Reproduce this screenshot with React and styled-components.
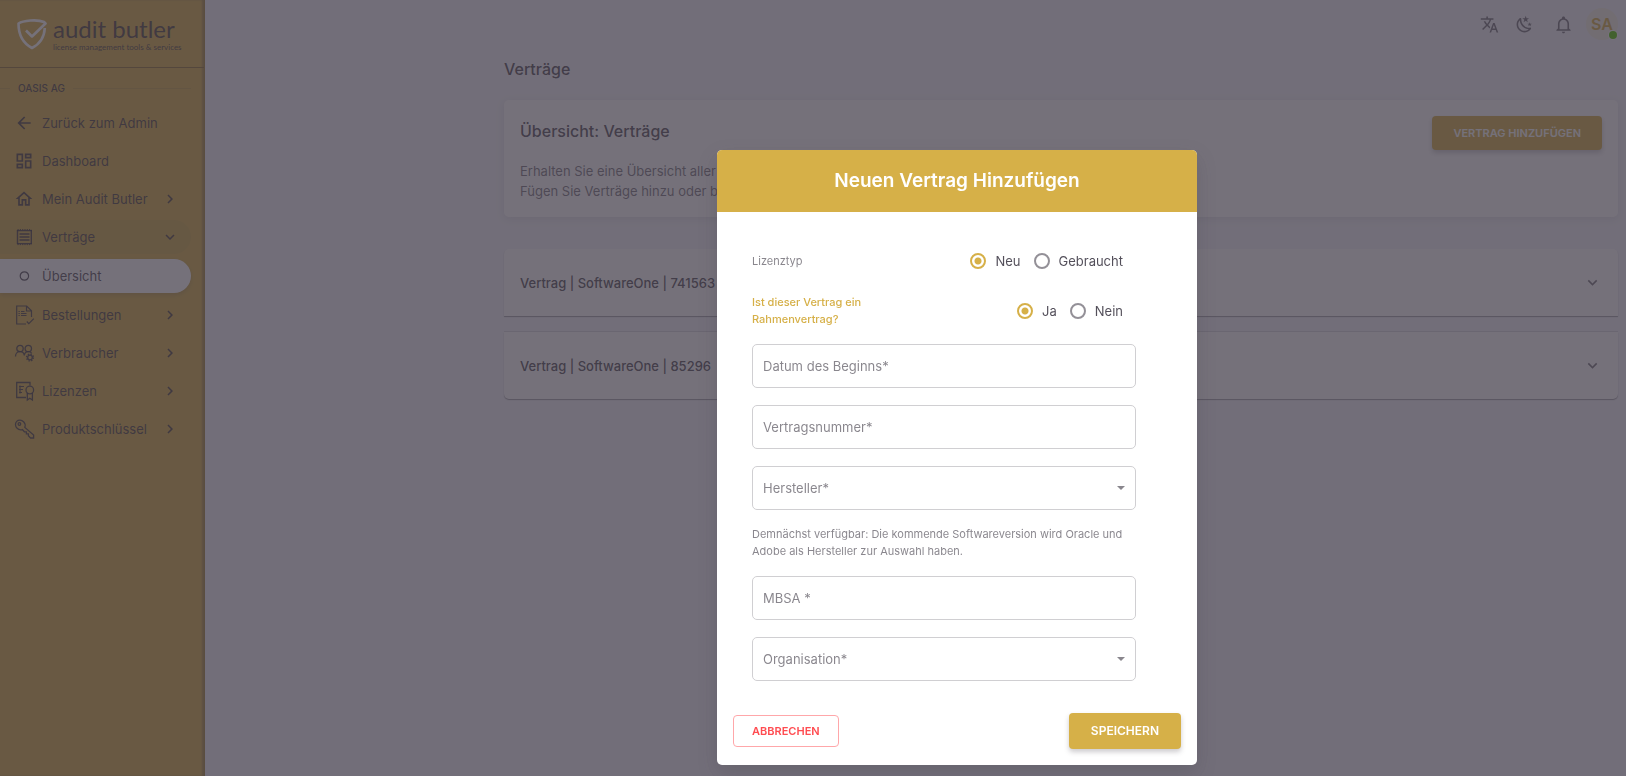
import React from 'react';
import styled, { createGlobalStyle } from 'styled-components';

const ink = 'rgba(58, 53, 65, 0.87)';
const inkSoft = 'rgba(58, 53, 65, 0.68)';
const inkFaint = 'rgba(58, 53, 65, 0.6)';
const gold = '#d6b048';

const GlobalStyle = createGlobalStyle`
  *, *::before, *::after { box-sizing: border-box; }
  body {
    margin: 0;
    background: #f4f5fa;
    color: ${ink};
    font-family: Inter, "Liberation Sans", sans-serif;
    font-size: 13px;
    line-height: 20px;
  }
  button, input, select { font: inherit; }
  h1, h2, p, ul { margin: 0; padding: 0; }
  ul { list-style: none; }
`;

const Shell = styled.div`
  display: flex;
  min-height: 100vh;
`;

const Sidebar = styled.nav`
  flex: none;
  width: 205px;
  background: ${gold};
  border-right: 1px solid #a4873a;
  box-shadow: inset -2px 0 2px rgba(58, 53, 65, 0.3);
`;

const Brand = styled.a`
  display: flex;
  align-items: center;
  gap: 6px;
  height: 68px;
  padding-left: 17px;
  border-bottom: 1px solid #8f7433;
  color: ${ink};
  text-decoration: none;
`;

const BrandText = styled.span`
  display: flex;
  flex-direction: column;
  font-family: Lato, "Liberation Sans", sans-serif;
`;

const BrandName = styled.span`
  font-size: 24px;
  line-height: 26px;
`;

const BrandLine = styled.span`
  font-size: 8px;
  line-height: 10px;
  white-space: nowrap;
`;

const SectionLabel = styled.h2`
  display: flex;
  align-items: center;
  gap: 8px;
  height: 20px;
  margin: 10px 13px 8px 0;
  font-size: 10px;
  font-weight: 500;
  white-space: nowrap;
  &::before, &::after {
    content: '';
    height: 1px;
    width: 10px;
    background: rgba(58, 53, 65, 0.12);
  }
  &::after { flex: 1; }
`;

const NavList = styled.ul`
  display: flex;
  flex-direction: column;
  gap: 4px;
  padding-right: 13px;
`;

const SubList = styled.ul`
  margin: 5px 0 1px;
`;

const NavLink = styled.a`
  display: flex;
  align-items: center;
  gap: 8px;
  height: 34px;
  padding: 0 12px 0 14px;
  border-radius: 0 17px 17px 0;
  color: ${ink};
  text-decoration: none;
  background: ${(p) => (p.$state === 'current' ? '#fff' : p.$state === 'open' ? 'rgba(58, 53, 65, 0.05)' : 'none')};
  box-shadow: ${(p) => (p.$state === 'current' ? '0 2px 4px rgba(58, 53, 65, 0.2)' : 'none')};
  span { flex: 1; }
  svg { flex: none; }
`;

const Main = styled.main`
  flex: 1;
  min-width: 0;
  padding: 0 8px 0 299px;
`;

const TopBar = styled.header`
  display: flex;
  justify-content: flex-end;
  align-items: center;
  gap: 16px;
  height: 48px;
`;

const IconButton = styled.button`
  display: flex;
  padding: 0;
  border: 0;
  background: none;
  color: ${inkSoft};
  &:nth-of-type(3) { margin: 0 -3px 0 4px; }
`;

const Avatar = styled.button`
  position: relative;
  width: 32px;
  height: 32px;
  padding: 0;
  border: 0;
  border-radius: 50%;
  background: #f6f0e3;
  color: ${gold};
  font-size: 16px;
  font-weight: 600;
`;

const Presence = styled.i`
  position: absolute;
  right: 1px;
  bottom: 1px;
  width: 8px;
  height: 8px;
  border-radius: 50%;
  background: #56ca00;
  box-shadow: 0 0 0 1px #fff;
`;

const PageTitle = styled.h1`
  margin: 9px 0 19px;
  font-size: 16px;
  line-height: 24px;
  font-weight: 500;
`;

const Card = styled.section`
  display: flex;
  justify-content: space-between;
  align-items: flex-start;
  margin-bottom: 32px;
  padding: 16px;
  border-radius: 5px;
  background: #fff;
  box-shadow: 0 2px 8px rgba(58, 53, 65, 0.1);
`;

const CardTitle = styled.h2`
  margin: 3px 0 18px;
  font-size: 16px;
  line-height: 24px;
  font-weight: 500;
`;

const CardText = styled.p`
  color: ${inkSoft};
`;

const Contracts = styled.div`
  display: flex;
  flex-direction: column;
  gap: 16px;
`;

const ContractRow = styled.button`
  display: flex;
  justify-content: space-between;
  align-items: center;
  height: 67px;
  padding: 0 16px;
  border: 0;
  border-radius: ${(p) => (p.$last ? '0 0 5px 5px' : '5px 5px 0 0')};
  background: #fff;
  box-shadow: 0 1px 1px rgba(58, 53, 65, 0.45), 0 -1px 0 rgba(58, 53, 65, ${(p) => (p.$last ? 0.14 : 0)});
  color: ${ink};
  font-weight: 500;
  svg { color: ${inkSoft}; }
`;

const SolidButton = styled.button`
  height: ${(p) => (p.$large ? 36 : 34)}px;
  padding: 0 ${(p) => (p.$large ? 22 : 21)}px;
  border: 0;
  border-radius: 4px;
  background: ${gold};
  color: #fff;
  font-size: ${(p) => (p.$large ? 12 : 11)}px;
  font-weight: 600;
  white-space: nowrap;
  box-shadow: 0 3px 5px rgba(58, 53, 65, 0.25);
`;

const OutlineButton = styled.button`
  height: 32px;
  padding: 0 18px;
  border: 1px solid #ffa7aa;
  border-radius: 4px;
  background: none;
  color: #ff4c51;
  font-size: 11px;
  font-weight: 600;
`;

const Backdrop = styled.div`
  position: fixed;
  inset: 0;
  display: flex;
  justify-content: center;
  align-items: flex-end;
  padding: 0 0 11px 288px;
  background: rgba(58, 53, 65, 0.7);
`;

const Dialog = styled.div`
  width: 480px;
  border-radius: 5px;
  overflow: hidden;
  background: #fff;
  box-shadow: 0 8px 20px rgba(58, 53, 65, 0.2);
`;

const DialogTitle = styled.h2`
  padding: 17px;
  background: ${gold};
  color: #fff;
  font-size: 19px;
  line-height: 28px;
  font-weight: 600;
  text-align: center;
`;

const DialogForm = styled.form`
  width: 454px;
  max-width: 100%;
  padding: 32px 35px;
`;

const Choice = styled.div`
  display: flex;
  align-items: center;
  justify-content: space-between;
  height: 34px;
  margin-bottom: 16px;
  padding-right: 13px;
`;

const ChoiceLabel = styled.span`
  width: 144px;
  font-size: 11px;
  line-height: 17px;
  font-weight: ${(p) => (p.$accent ? 500 : 400)};
  color: ${(p) => (p.$accent ? gold : inkFaint)};
`;

const Options = styled.div`
  display: flex;
  gap: 13px;
`;

const Option = styled.label`
  display: flex;
  align-items: center;
  gap: 9px;
`;

const Radio = styled.input`
  appearance: none;
  width: 16px;
  height: 16px;
  margin: 0;
  border: 2px solid rgba(58, 53, 65, 0.55);
  border-radius: 50%;
  &:checked {
    border-color: ${gold};
    background: radial-gradient(circle, ${gold} 0 3px, transparent 4px);
  }
`;

const Fields = styled.div`
  display: flex;
  flex-direction: column;
  gap: 17px;
`;

const TextField = styled.input`
  width: 100%;
  height: 44px;
  padding: 0 10px;
  border: 1px solid #d0cfd2;
  border-radius: 5px;
  background: #fff;
  color: ${ink};
  &::placeholder { color: ${inkFaint}; opacity: 1; }
`;

const SelectWrap = styled.div`
  position: relative;
  svg {
    position: absolute;
    right: 11px;
    top: 20px;
    color: ${inkFaint};
    pointer-events: none;
  }
`;

const SelectField = styled(TextField).attrs({ as: 'select' })`
  display: block;
  appearance: none;
  color: ${inkFaint};
`;

const Note = styled.p`
  padding: 16px 0;
  font-size: 11px;
  line-height: 17px;
  color: ${inkFaint};
`;

const DialogActions = styled.div`
  display: flex;
  justify-content: space-between;
  align-items: center;
  padding: 0 16px 16px;
`;

const PATHS = {
  back: 'M20,11V13H8L13.5,18.5L12.08,19.92L4.16,12L12.08,4.08L13.5,5.5L8,11H20Z',
  dashboard: 'M19,5V7H15V5H19M9,5V11H5V5H9M19,13V19H15V13H19M9,17V19H5V17H9M21,3H13V9H21V3M11,3H3V13H11V3M21,11H13V21H21V11M11,15H3V21H11V15Z',
  home: 'M12 5.69L17 10.19V18H15V12H9V18H7V10.19L12 5.69M12 3L2 12H5V20H11V14H13V20H19V12H22',
  right: 'M8.59,16.58L13.17,12L8.59,7.41L10,6L16,12L10,18L8.59,16.58Z',
  down: 'M7.41,8.58L12,13.17L16.59,8.58L18,10L12,16L6,10L7.41,8.58Z',
  translate: 'M12.87,15.07L10.33,12.56L10.36,12.53C12.1,10.59 13.34,8.36 14.07,6H17V4H10V2H8V4H1V6H12.17C11.5,7.92 10.44,9.75 9,11.35C8.07,10.32 7.3,9.19 6.69,8H4.69C5.42,9.63 6.42,11.17 7.67,12.56L2.58,17.58L4,19L9,14L12.11,17.11L12.87,15.07M18.5,10H16.5L12,22H14L15.12,19H19.87L21,22H23L18.5,10M15.88,17L17.5,12.67L19.12,17H15.88Z',
  bell: 'M10 21H14C14 22.1 13.1 23 12 23S10 22.1 10 21M21 19V20H3V19L5 17V11C5 7.9 7.03 5.17 10 4.29C10 4.19 10 4.1 10 4C10 2.9 10.9 2 12 2S14 2.9 14 4C14 4.1 14 4.19 14 4.29C16.97 5.17 19 7.9 19 11V17L21 19M17 11C17 8.24 14.76 6 12 6S7 8.24 7 11V18H17V11Z',
  night: 'M17.75,4.09L15.22,6.03L16.13,9.09L13.5,7.28L10.87,9.09L11.78,6.03L9.25,4.09L12.44,4L13.5,1L14.56,4L17.75,4.09M21.25,11L19.61,12.25L20.2,14.23L18.5,13.06L16.8,14.23L17.39,12.25L15.75,11L17.81,10.95L18.5,9L19.19,10.95L21.25,11M18.97,15.95C19.8,15.87 20.69,17.05 20.16,17.8C19.84,18.25 19.5,18.67 19.08,19.07C15.17,23 8.84,23 4.94,19.07C1.03,15.17 1.03,8.83 4.94,4.93C5.34,4.53 5.76,4.17 6.21,3.85C6.96,3.32 8.14,4.21 8.06,5.04C7.79,7.9 8.75,10.87 10.95,13.06C13.14,15.26 16.1,16.22 18.97,15.95M17.33,17.97C14.5,17.81 11.7,16.64 9.53,14.5C7.36,12.31 6.2,9.5 6.04,6.68C3.23,9.82 3.34,14.64 6.35,17.66C9.37,20.67 14.19,20.78 17.33,17.97Z',
};

const Icon = ({ name, size = 20 }) => (
  <svg width={size} height={size} viewBox="0 0 24 24" fill="currentColor" aria-hidden="true">
    <path d={PATHS[name]} />
  </svg>
);

const Line = ({ children, width = 1.4 }) => (
  <svg width="20" height="20" viewBox="0 0 20 20" fill="none" stroke="currentColor" strokeWidth={width} overflow="visible" aria-hidden="true">
    {children}
  </svg>
);

const ReceiptIcon = () => (
  <Line>
    <path d="M3.5 3v14M17.3 3v14" />
    <path d="M3 3.6h15M3 16.6h15" strokeWidth="1.2" />
    <path d="M3.5 2.6h14M3.5 17.6h14" strokeDasharray="1.2 1.1" strokeWidth="1" />
    <path d="M5.5 7h10M5.5 10h10M5.5 13h10" />
  </Line>
);

const CircleIcon = () => (
  <Line width={1.2}>
    <circle cx="10.4" cy="10" r="4.2" />
  </Line>
);

const OrderIcon = () => (
  <Line width={1.2}>
    <path d="M12 19H2.7V1h10l4.8 4.8V12M12.5 1v5h5" />
    <path d="M4.5 6.5h1.3M4.5 10.5h1.3M7 6.5h3.5M7 10.5h5.5M4.5 8.5h1.3M7 8.5h5.5" strokeWidth="1" />
    <path d="M12.8 16.5l2 2.2 5-5" />
  </Line>
);

const UsersIcon = () => (
  <Line width={1.3}>
    <circle cx="6" cy="5.5" r="3.2" />
    <circle cx="14.3" cy="5.5" r="3.2" />
    <path d="M1.5 13.5c0-3 2-4.8 4.5-4.8s4 1.5 4.3 3.8c.3-2.3 1.8-3.8 4-3.8 1.5 0 2.7.6 3.5 1.6" />
    <circle cx="16" cy="14.5" r="2.3" />
    <circle cx="16" cy="14.5" r="3.4" strokeDasharray="1.4 1.27" strokeWidth="1.4" />
  </Line>
);

const LicenseIcon = () => (
  <Line width={1.3}>
    <path d="M12 16.5H2.7V1.5H16v3" />
    <path d="M5 5.5h5M5 8.5h4M5 11.5h3M6 4.5v8" strokeWidth="1.2" />
    <circle cx="15.8" cy="9" r="3.8" />
    <path d="M13.3 12v7l2.5-1.8 2.6 1.8v-7" />
  </Line>
);

const KeyIcon = () => (
  <Line width={1.3}>
    <path d="M10.8 8.4c.7-2 .2-4.2-1.2-5.6C7.5.7 4.4.7 2.7 2.4 1 4.1 1 7.2 3.1 9.3c1.4 1.4 3.5 1.9 5.3 1.3l2 2.2h2v2h2v2l2.2 2.2h3v-3z" />
    <circle cx="5.4" cy="5" r="1.3" />
  </Line>
);

const ShieldLogo = () => (
  <svg width="30" height="32" viewBox="0 0 30 32" fill="none" stroke="#fff" strokeWidth="2.6" aria-hidden="true">
    <path d="M27.8 10c-.5 9-5 16-12.8 20C6.5 25.5 1.5 18 1.5 5.5 6 2.5 20 1 27 4l1.5 1.5L15 18.5l-6-6" strokeLinejoin="round" />
  </svg>
);

const Caret = () => (
  <svg width="8" height="4" viewBox="0 0 8 4" fill="currentColor" aria-hidden="true">
    <path d="M0 0h8L4 4z" />
  </svg>
);

const NavItem = ({ icon, label, arrow, state, children }) => (
  <li>
    <NavLink href="#" $state={state} aria-current={state === 'current' ? 'page' : undefined}>
      {icon}
      <span>{label}</span>
      {arrow && <Icon name={arrow} size={18} />}
    </NavLink>
    {children}
  </li>
);

const RadioChoice = ({ name, label, accent, options }) => (
  <Choice role="radiogroup" aria-labelledby={`${name}-label`}>
    <ChoiceLabel id={`${name}-label`} $accent={accent}>{label}</ChoiceLabel>
    <Options>
      {options.map((text, i) => (
        <Option key={text}>
          <Radio type="radio" name={name} value={text} defaultChecked={i === 0} />
          {text}
        </Option>
      ))}
    </Options>
  </Choice>
);

const Select = ({ label }) => (
  <SelectWrap>
    <SelectField aria-label={label} defaultValue="">
      <option value="">{label}</option>
    </SelectField>
    <Caret />
  </SelectWrap>
);

export default function App() {
  return (
    <>
      <GlobalStyle />
      <Shell>
        <Sidebar aria-label="Navigation">
          <Brand href="#">
            <ShieldLogo />
            <BrandText>
              <BrandName>audit butler</BrandName>
              <BrandLine>license management tools &amp; services</BrandLine>
            </BrandText>
          </Brand>
          <SectionLabel>OASIS AG</SectionLabel>
          <NavList>
            <NavItem icon={<Icon name="back" />} label="Zurück zum Admin" />
            <NavItem icon={<Icon name="dashboard" />} label="Dashboard" />
            <NavItem icon={<Icon name="home" />} label="Mein Audit Butler" arrow="right" />
            <NavItem icon={<ReceiptIcon />} label="Verträge" arrow="down" state="open">
              <SubList>
                <NavItem icon={<CircleIcon />} label="Übersicht" state="current" />
              </SubList>
            </NavItem>
            <NavItem icon={<OrderIcon />} label="Bestellungen" arrow="right" />
            <NavItem icon={<UsersIcon />} label="Verbraucher" arrow="right" />
            <NavItem icon={<LicenseIcon />} label="Lizenzen" arrow="right" />
            <NavItem icon={<KeyIcon />} label="Produktschlüssel" arrow="right" />
          </NavList>
        </Sidebar>
        <Main>
          <TopBar>
            <IconButton aria-label="Sprache"><Icon name="translate" size={19} /></IconButton>
            <IconButton aria-label="Dunkler Modus"><Icon name="night" size={19} /></IconButton>
            <IconButton aria-label="Benachrichtigungen"><Icon name="bell" size={19} /></IconButton>
            <Avatar aria-label="Benutzerkonto SA">SA<Presence /></Avatar>
          </TopBar>
          <PageTitle>Verträge</PageTitle>
          <Card>
            <div>
              <CardTitle>Übersicht: Verträge</CardTitle>
              <CardText>Erhalten Sie eine Übersicht aller Verträge.</CardText>
              <CardText>Fügen Sie Verträge hinzu oder bearbeiten Sie diese.</CardText>
            </div>
            <SolidButton>VERTRAG HINZUFÜGEN</SolidButton>
          </Card>
          <Contracts>
            <ContractRow>Vertrag | SoftwareOne | 741563<Icon name="down" size={19} /></ContractRow>
            <ContractRow $last>Vertrag | SoftwareOne | 85296<Icon name="down" size={19} /></ContractRow>
          </Contracts>
        </Main>
      </Shell>
      <Backdrop>
        <Dialog role="dialog" aria-modal="true" aria-labelledby="dialog-title">
          <DialogTitle id="dialog-title">Neuen Vertrag Hinzufügen</DialogTitle>
          <DialogForm id="contract-form">
            <RadioChoice name="type" label="Lizenztyp" options={['Neu', 'Gebraucht']} />
            <RadioChoice name="frame" label="Ist dieser Vertrag ein Rahmenvertrag?" accent options={['Ja', 'Nein']} />
            <Fields>
              <TextField aria-label="Datum des Beginns" placeholder="Datum des Beginns*" />
              <TextField aria-label="Vertragsnummer" placeholder="Vertragsnummer*" />
              <Select label="Hersteller*" />
            </Fields>
            <Note>Demnächst verfügbar: Die kommende Softwareversion wird Oracle und Adobe als Hersteller zur Auswahl haben.</Note>
            <Fields>
              <TextField aria-label="MBSA" placeholder="MBSA *" />
              <Select label="Organisation*" />
            </Fields>
          </DialogForm>
          <DialogActions>
            <OutlineButton type="button">ABBRECHEN</OutlineButton>
            <SolidButton type="submit" form="contract-form" $large>SPEICHERN</SolidButton>
          </DialogActions>
        </Dialog>
      </Backdrop>
    </>
  );
}
